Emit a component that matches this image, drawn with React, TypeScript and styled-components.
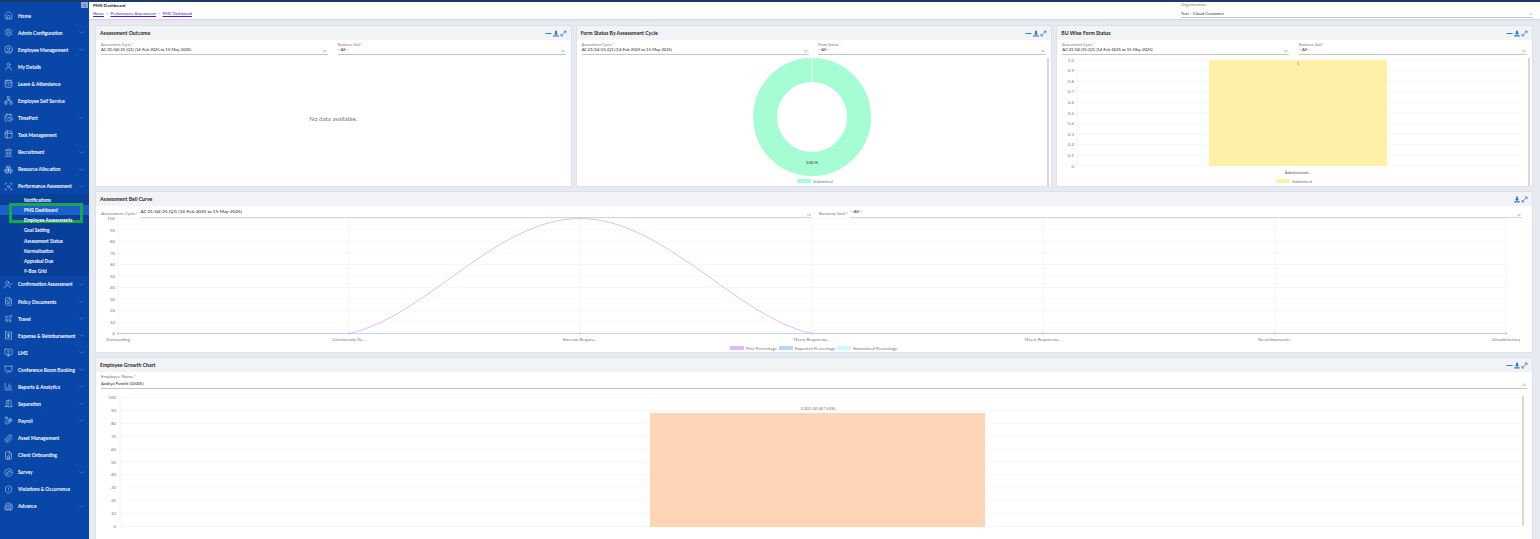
import styled, { createGlobalStyle } from "styled-components";
import {
  Home, Settings, CircleUser, User, CalendarDays, Network, CalendarClock, Table2, Landmark, Boxes, ScanSearch,
  UserCheck, FileText, Plane, Receipt, MonitorPlay, Presentation, BarChart3, DoorOpen, HandCoins, Paperclip,
  FileUser, Compass, ShieldAlert, Building2, ChevronDown, ChevronsLeft,
} from "lucide-react";
import type { LucideIcon } from "lucide-react";

const CYCLE = "AC 01/04/25 (Q1) (14-Feb-2025 to 15-May-2025)";

type NavEntry = { label: string; icon: LucideIcon; arrow?: boolean; children?: string[] };

const NAV: NavEntry[] = [
  { label: "Home", icon: Home },
  { label: "Admin Configuration", icon: Settings, arrow: true },
  { label: "Employee Management", icon: CircleUser, arrow: true },
  { label: "My Details", icon: User },
  { label: "Leave & Attendance", icon: CalendarDays },
  { label: "Employee Self Service", icon: Network },
  { label: "TimePort", icon: CalendarClock, arrow: true },
  { label: "Task Management", icon: Table2 },
  { label: "Recruitment", icon: Landmark, arrow: true },
  { label: "Resource Allocation", icon: Boxes, arrow: true },
  {
    label: "Performance Assessment",
    icon: ScanSearch,
    arrow: true,
    children: [
      "Notifications", "PMS Dashboard", "Employee Assessments", "Goal Setting",
      "Assessment Status", "Normalisation", "Appraisal Due", "9-Box Grid",
    ],
  },
  { label: "Confirmation Assessment", icon: UserCheck, arrow: true },
  { label: "Policy Documents", icon: FileText, arrow: true },
  { label: "Travel", icon: Plane, arrow: true },
  { label: "Expense & Reimbursement", icon: Receipt, arrow: true },
  { label: "LMS", icon: MonitorPlay, arrow: true },
  { label: "Conference Room Booking", icon: Presentation, arrow: true },
  { label: "Reports & Analytics", icon: BarChart3, arrow: true },
  { label: "Separation", icon: DoorOpen, arrow: true },
  { label: "Payroll", icon: HandCoins, arrow: true },
  { label: "Asset Management", icon: Paperclip },
  { label: "Client Onboarding", icon: FileUser },
  { label: "Survey", icon: Compass, arrow: true },
  { label: "Violations & Occurrence", icon: ShieldAlert },
  { label: "Advance", icon: Building2, arrow: true },
];

const Global = createGlobalStyle`
  html, body { margin: 0; height: 100%; overflow: hidden; background: #e7eaf1; }
  body { font-family: Lato, "Open Sans", sans-serif; }
  #root { height: 539px; }
  * { box-sizing: border-box; }
`;

const Page = styled.div`
  display: grid;
  grid-template-columns: 89px 1fr;
  width: 1540px;
  height: 539px;
  border-top: 2px solid #1c3a6b;
  overflow: hidden;
`;

const Sidebar = styled.nav`
  position: relative;
  background: #0846a8;
  padding-top: 5px;
  color: #fff;
`;

const Collapse = styled.span`
  position: absolute;
  top: 0;
  right: 1px;
  width: 7px;
  height: 6px;
  background: #8fa9d6;
  color: #0846a8;
  display: flex;
  align-items: center;
  justify-content: center;
`;

const NavRow = styled.div`
  display: flex;
  align-items: center;
  height: 17.07px;
  padding-left: 4px;
  font-size: 4.8px;
  font-weight: 700;
  white-space: nowrap;
`;

const NavIcon = styled.span`
  width: 14px;
  display: flex;
  color: #b3caee;
`;

const NavLabel = styled.span`
  flex: 1;
`;

const NavArrow = styled.span`
  display: flex;
  width: 11px;
  color: #7fa3dc;
`;

const SubMenu = styled.div`
  background: #083f9b;
  padding-top: 1.5px;
  margin-top: -1px;
`;

const SubRow = styled.div<{ $active: boolean }>`
  position: relative;
  height: 10.1px;
  line-height: 10.1px;
  padding-left: 24px;
  font-size: 4.7px;
  font-weight: 700;
  white-space: nowrap;
  background: ${({ $active }) => ($active ? "#1c5fca" : "transparent")};
  ${({ $active }) => $active && `
    &::after {
      content: "";
      position: absolute;
      left: 9px;
      top: -2px;
      width: 68px;
      height: 14px;
      border: 3px solid #17a84a;
    }
  `}
`;

const Main = styled.main`
  display: flex;
  flex-direction: column;
  min-width: 0;
`;

const TopBar = styled.header`
  display: flex;
  justify-content: space-between;
  height: 17px;
  padding: 0 7px 0 4px;
  background: #fff;
  box-shadow: 0 1px 2px #cfd3da;
  flex: none;
`;

const PageTitle = styled.div`
  font-size: 4.5px;
  font-weight: 700;
  color: #1a1a1a;
  margin-top: 1px;
  line-height: 6px;
`;

const Crumbs = styled.div`
  display: flex;
  gap: 2px;
  font-size: 4.15px;
  line-height: 7px;
  color: #999;
  margin-top: 0.5px;
  a { color: #4b18e0; text-decoration: underline; }
`;

const OrgField = styled.div`
  width: 352px;
  font-size: 4.4px;
  border-bottom: 1px solid #c8c8c8;
  height: 16px;
`;

const OrgLabel = styled.div`
  color: #777;
  line-height: 5px;
  margin-bottom: 3px;
`;

const OrgValue = styled.div`
  display: flex;
  justify-content: space-between;
  align-items: center;
  color: #333;
  line-height: 7px;
`;

const Board = styled.div`
  display: grid;
  grid-template-columns: repeat(3, 1fr);
  grid-template-rows: 162px 162px 190px;
  gap: 4px;
  padding: 6px 7px 0 6px;
`;

const Card = styled.section<{ $wide?: boolean }>`
  grid-column: ${({ $wide }) => ($wide ? "1 / -1" : "auto")};
  position: relative;
  background: #fff;
  border: 1px solid #dde1ea;
  overflow: hidden;
`;

const CardHead = styled.div`
  display: flex;
  align-items: center;
  justify-content: space-between;
  height: 14px;
  padding: 0 4px;
  background: #f2f3f6;
  font-size: 5.2px;
  font-weight: 700;
  color: #1d1d1d;
`;

const Tools = styled.div`
  display: flex;
  align-items: center;
  gap: 1px;
  color: #2f7cc8;
  svg { display: block; }
`;

const Filters = styled.div<{ $single?: boolean }>`
  display: grid;
  grid-template-columns: ${({ $single }) => ($single ? "1fr" : "227px 228px")};
  justify-content: space-between;
  padding: 2px 5px 0;
`;

const Field = styled.div<{ $tall?: boolean }>`
  border-bottom: 1px solid #c4c4c4;
  height: ${({ $tall }) => ($tall ? 15 : 13)}px;
  font-size: ${({ $tall }) => ($tall ? 4.5 : 3.8)}px;
  position: relative;
`;

const FieldLabel = styled.div`
  color: #777;
  line-height: 5px;
  span { color: #e33; }
`;

const FieldValue = styled.div<{ $tall?: boolean }>`
  color: #222;
  font-size: 4.05px;
  line-height: 6px;
  margin-top: ${({ $tall }) => ($tall ? 1.5 : 0)}px;
  white-space: nowrap;
`;

const FieldCaret = styled.span`
  position: absolute;
  right: 1px;
  bottom: 1px;
  color: #888;
  font-size: 4px;
  line-height: 5px;
`;

const InlineFilters = styled.div`
  display: grid;
  grid-template-columns: 711px 703px;
  gap: 7px;
  padding: 2px 5px 0;
`;

const InlineField = styled.div`
  position: relative;
  display: flex;
  align-items: center;
  gap: 2px;
  height: 10px;
  font-size: 4.4px;
  white-space: nowrap;
`;

const InlineLabel = styled.span`
  color: #777;
  span { color: #e33; }
`;

const InlineValue = styled.span`
  flex: 1;
  color: #222;
  font-size: 4.55px;
  border-bottom: 1px solid #d6d6d6;
  line-height: 8px;
  height: 10px;
`;

const Empty = styled.div`
  display: flex;
  justify-content: center;
  padding-top: 60px;
  font-size: 6.2px;
  color: #777;
`;

const ChartWrap = styled.div`
  position: relative;
  margin-top: 1px;
`;

const BellWrap = styled.div`
  margin-top: -1px;
`;

const Scrollbar = styled.span<{ $inset?: boolean }>`
  position: absolute;
  top: ${({ $inset }) => ($inset ? 6 : 2)}px;
  bottom: ${({ $inset }) => ($inset ? 4 : 2)}px;
  right: ${({ $inset }) => ($inset ? 8 : 2)}px;
  width: 2px;
  background: #d8d8d8;
`;

const chartFont = { fontFamily: "Lato, sans-serif", fontSize: 4.4, fill: "#777" };

function CardTools({ minus = true }: { minus?: boolean }) {
  return (
    <Tools>
      {minus && (
        <svg width={7} height={7} viewBox="0 0 7 7"><rect x={0.5} y={3} width={6} height={1} fill="currentColor" /></svg>
      )}
      <svg width={6} height={7} viewBox="0 0 6 7">
        <path d="M2 0.8h2v2.4h1.4L3 5 0.6 3.2H2z M0.2 5.2h5.6v1.2H0.2z" fill="currentColor" />
      </svg>
      <svg width={7} height={7} viewBox="0 0 7 7">
        <path d="M1.2 5.8L5.8 1.2 M3.8 1h2.2v2.2 M1 3.8v2.2h2.2" fill="none" stroke="currentColor" strokeWidth={0.8} />
      </svg>
    </Tools>
  );
}

function Select({ label, value, tall }: { label: string; value: string; tall?: boolean }) {
  return (
    <Field $tall={tall}>
      <FieldLabel>{label}:<span>*</span></FieldLabel>
      <FieldValue $tall={tall}>{value}</FieldValue>
      <FieldCaret>|∨</FieldCaret>
    </Field>
  );
}

function Legend({ x, y, items }: { x: number; y: number; items: { color: string; label: string; w: number }[] }) {
  let cur = x;
  return (
    <g>
      {items.map((it) => {
        const sx = cur;
        cur += 15 + it.w + 3;
        return (
          <g key={it.label}>
            <rect x={sx} y={y - 2} width={14} height={4} fill={it.color} />
            <text x={sx + 16} y={y + 1.6} {...chartFont}>{it.label}</text>
          </g>
        );
      })}
    </g>
  );
}

function DonutChart() {
  return (
    <ChartWrap>
      <svg width={475} height={132} viewBox="0 0 475 132" style={{ display: "block" }}>
        <circle cx={235} cy={61} r={47} fill="none" stroke="#a6fdd4" strokeWidth={24} />
        <line x1={235} y1={1} x2={235} y2={26} stroke="#fff" strokeWidth={0.7} />
        <text x={235} y={108} textAnchor="middle" {...chartFont} fill="#333">100 %</text>
        <Legend x={220} y={125} items={[{ color: "#a6fdd4", label: "Submitted", w: 20 }]} />
      </svg>
      <Scrollbar />
    </ChartWrap>
  );
}

function YellowBarChart() {
  const ticks = Array.from({ length: 11 }, (_, i) => i);
  return (
    <ChartWrap>
      <svg width={475} height={132} viewBox="0 0 475 132" style={{ display: "block" }}>
        {ticks.map((t) => {
          const y = 4 + t * 10.6;
          return (
            <g key={t}>
              <line x1={20} x2={462} y1={y} y2={y} stroke="#f0f0f0" strokeWidth={0.6} />
              <text x={17} y={y + 1.5} textAnchor="end" {...chartFont}>
                {t === 10 ? "0" : ((10 - t) / 10).toFixed(1)}
              </text>
            </g>
          );
        })}
        <line x1={20} x2={20} y1={4} y2={110} stroke="#eee" strokeWidth={0.6} />
        <rect x={152} y={4} width={178} height={106} fill="#fff0a8" />
        <text x={241} y={9} textAnchor="middle" {...chartFont}>1</text>
        <text x={241} y={117.5} textAnchor="middle" {...chartFont} fill="#555">Administrati...</text>
        <Legend x={219} y={125} items={[{ color: "#fff0a8", label: "Submitted", w: 20 }]} />
      </svg>
      <Scrollbar />
    </ChartWrap>
  );
}

function BellChart() {
  const ticks = Array.from({ length: 11 }, (_, i) => i);
  const xs = [22, 253, 484, 716, 947, 1179, 1410];
  const labels = ["Outstanding", "Consistently De...", "Exceeds Require...", "Meets Requireme...", "Meets Requireme...", "Need Improvem...", "Unsatisfactory"];
  return (
    <BellWrap>
      <svg width={1436} height={136} viewBox="0 0 1436 136" style={{ display: "block" }}>
        {ticks.map((t) => {
          const y = 1.5 + t * 11.5;
          return (
            <g key={t}>
              <line x1={22} x2={1410} y1={y} y2={y} stroke="#f3f3f3" strokeWidth={0.6} />
              <text x={19} y={y + 1.5} textAnchor="end" {...chartFont}>{100 - t * 10}</text>
            </g>
          );
        })}
        {xs.map((x) => (
          <line key={x} x1={x} x2={x} y1={1.5} y2={116.5} stroke="#eeeeee" strokeWidth={0.6} />
        ))}
        <line x1={22} x2={1410} y1={116.5} y2={116.5} stroke="#bcd8ff" strokeWidth={1} />
        <path
          d="M22 116.5 L253 116.5 C330 100 400 1.5 484 1.5 C568 1.5 640 100 716 116.5 L1410 116.5"
          fill="none"
          stroke="#dcbcff"
          strokeWidth={1}
        />
        {xs.map((x, i) => (
          <g key={`l${x}`}>
            <circle cx={x} cy={116.5} r={0.9} fill="#cfa9ff" />
            <text x={x} y={124} textAnchor="middle" {...chartFont}>{labels[i]}</text>
          </g>
        ))}
        <Legend
          x={634}
          y={131}
          items={[
            { color: "#dfb8ff", label: "First Percentage", w: 31 },
            { color: "#b9d4ff", label: "Expected Percentage", w: 40 },
            { color: "#ccfaff", label: "Normalised Percentage", w: 44 },
          ]}
        />
      </svg>
    </BellWrap>
  );
}

function GrowthChart() {
  const ticks = Array.from({ length: 11 }, (_, i) => i);
  return (
    <ChartWrap>
      <svg width={1436} height={140} viewBox="0 0 1436 140" style={{ display: "block" }}>
        {ticks.map((t) => {
          const y = 7.5 + t * 12.9;
          return (
            <g key={t}>
              <line x1={24} x2={1424} y1={y} y2={y} stroke="#f2f2f2" strokeWidth={0.6} />
              <text x={20} y={y + 1.5} textAnchor="end" {...chartFont}>{100 - t * 10}</text>
            </g>
          );
        })}
        <line x1={24} x2={24} y1={7.5} y2={136.5} stroke="#eee" strokeWidth={0.6} />
        <rect x={554} y={23} width={335} height={114} fill="#ffd5b8" />
        <text x={722} y={19.5} textAnchor="middle" {...chartFont}>3,201.00 (87.55%)</text>
      </svg>
      <Scrollbar $inset />
    </ChartWrap>
  );
}

export default function App() {
  return (
    <>
      <Global />
      <Page>
        <Sidebar>
          <Collapse><ChevronsLeft size={5} /></Collapse>
          {NAV.map((item) => (
            <div key={item.label}>
              <NavRow>
                <NavIcon><item.icon size={9} strokeWidth={1.6} /></NavIcon>
                <NavLabel>{item.label}</NavLabel>
                {item.arrow && <NavArrow><ChevronDown size={7} strokeWidth={1.5} /></NavArrow>}
              </NavRow>
              {item.children && (
                <SubMenu>
                  {item.children.map((c) => (
                    <SubRow key={c} $active={c === "PMS Dashboard"}>{c}</SubRow>
                  ))}
                </SubMenu>
              )}
            </div>
          ))}
        </Sidebar>
        <Main>
          <TopBar>
            <div>
              <PageTitle>PMS Dashboard</PageTitle>
              <Crumbs>
                <a>Home</a><span>&gt;</span><a>Performance Assessment</a><span>&gt;</span><a>PMS Dashboard</a>
              </Crumbs>
            </div>
            <OrgField>
              <OrgLabel>Organisation:</OrgLabel>
              <OrgValue>Test - Cloud Customer<ChevronDown size={4} /></OrgValue>
            </OrgField>
          </TopBar>
          <Board>
            <Card>
              <CardHead>Assessment Outcome<CardTools /></CardHead>
              <Filters>
                <Select label="Assessment Cycle" value={CYCLE} />
                <Select label="Business Unit" value="--All--" />
              </Filters>
              <Empty>No data available.</Empty>
            </Card>
            <Card>
              <CardHead>Form Status By Assessment Cycle<CardTools /></CardHead>
              <Filters>
                <Select label="Assessment Cycle" value={CYCLE} />
                <Select label="Form Status" value="--All--" />
              </Filters>
              <DonutChart />
            </Card>
            <Card>
              <CardHead>BU Wise Form Status<CardTools /></CardHead>
              <Filters>
                <Select label="Assessment Cycle" value={CYCLE} />
                <Select label="Business Unit" value="--All--" />
              </Filters>
              <YellowBarChart />
            </Card>
            <Card $wide>
              <CardHead>Assessment Bell Curve<CardTools minus={false} /></CardHead>
              <InlineFilters>
                <InlineField>
                  <InlineLabel>Assessment Cycle:<span>*</span></InlineLabel>
                  <InlineValue>{CYCLE}</InlineValue>
                  <FieldCaret>|∨</FieldCaret>
                </InlineField>
                <InlineField>
                  <InlineLabel>Business Unit:<span>*</span></InlineLabel>
                  <InlineValue>--All--</InlineValue>
                  <FieldCaret>|∨</FieldCaret>
                </InlineField>
              </InlineFilters>
              <BellChart />
            </Card>
            <Card $wide>
              <CardHead>Employee Growth Chart<CardTools /></CardHead>
              <Filters $single>
                <Select label="Employee Name" value="Aaditya Purohit (03005)" tall />
              </Filters>
              <GrowthChart />
            </Card>
          </Board>
        </Main>
      </Page>
    </>
  );
}
